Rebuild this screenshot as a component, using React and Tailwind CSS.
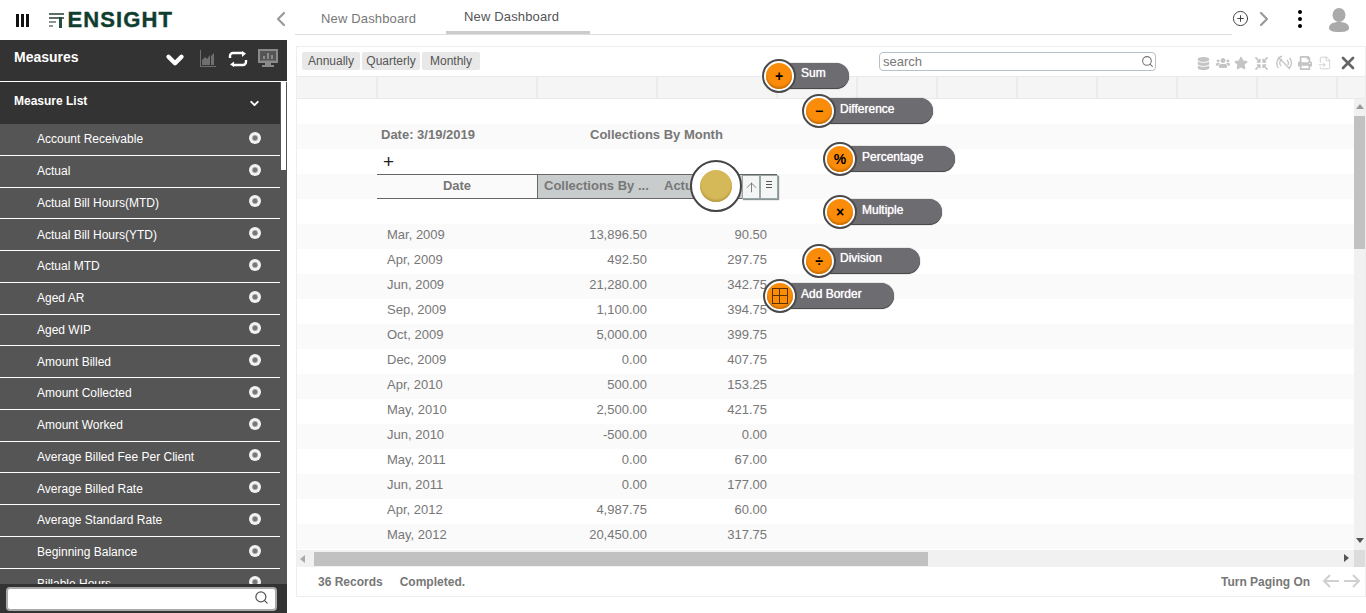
import React from 'react';
import { FaDatabase, FaUsers, FaStar, FaPrint, FaCompressArrowsAlt } from 'react-icons/fa';
import { ChevronDown, ChevronLeft, ChevronRight, CirclePlus, FileInput, X, ArrowUp, Search } from 'lucide-react';

const measures = [
    'Account Receivable', 'Actual', 'Actual Bill Hours(MTD)', 'Actual Bill Hours(YTD)', 'Actual MTD',
    'Aged AR', 'Aged WIP', 'Amount Billed', 'Amount Collected', 'Amount Worked',
    'Average Billed Fee Per Client', 'Average Billed Rate', 'Average Standard Rate', 'Beginning Balance', 'Billable Hours',
];

const rows = [
    ['Mar, 2009', '13,896.50', '90.50'], ['Apr, 2009', '492.50', '297.75'], ['Jun, 2009', '21,280.00', '342.75'],
    ['Sep, 2009', '1,100.00', '394.75'], ['Oct, 2009', '5,000.00', '399.75'], ['Dec, 2009', '0.00', '407.75'],
    ['Apr, 2010', '500.00', '153.25'], ['May, 2010', '2,500.00', '421.75'], ['Jun, 2010', '-500.00', '0.00'],
    ['May, 2011', '0.00', '67.00'], ['Jun, 2011', '0.00', '177.00'], ['Apr, 2012', '4,987.75', '60.00'],
    ['May, 2012', '20,450.00', '317.75'],
];

const colCells = ['w-[81px]', 'w-[160px]', 'w-[120px]', 'w-[120px]', 'w-[80px]', 'w-[80px]', 'w-[80px]', 'w-[80px]', 'w-[80px]', 'w-[80px]', 'w-[80px]', 'w-[80px]'];

const fabs = [
    { label: 'Sum', icon: '+', pos: 'left-[762px] top-[59px]', pill: 'w-[87px]', text: 'ml-[23px]' },
    { label: 'Difference', icon: '−', pos: 'left-[802px] top-[94px]', pill: 'w-[131px]', text: 'ml-[22px] pt-[1px]' },
    { label: 'Percentage', icon: '%', pos: 'left-[823px] top-[142px]', pill: 'w-[132px]', text: 'ml-[23px] pt-[1px]' },
    { label: 'Multiple', icon: '×', pos: 'left-[823px] top-[195px]', pill: 'w-[119px]', text: 'ml-[23px] pt-[1px]' },
    { label: 'Division', icon: '÷', pos: 'left-[802px] top-[244px]', pill: 'w-[118px]', text: 'ml-[22px]' },
    { label: 'Add Border', icon: 'border', pos: 'left-[763px] top-[279px]', pill: 'w-[131px]', text: 'ml-[22px] pt-[1px]' },
];

function Fab({ label, icon, pos, pill, text }) {
    return (
        <div className={`absolute ${pos} h-[34px] ${pill} flex items-center`}>
            <div className="absolute left-[16px] right-0 top-[4px] h-[26px] rounded-r-[13px] bg-[#6d6c71] border-b border-[#4a4a4a] shadow-[0_0_1px_#444]">
                <span className={`block ${text} text-[12px] leading-[20px] text-white [text-shadow:0_0_1px_#fff]`}>{label}</span>
            </div>
            <div className="relative w-[34px] h-[34px] rounded-full bg-white border-2 border-[#4a4a4a] flex items-center justify-center">
                <div className="w-[26px] h-[26px] rounded-full bg-[#fb8c0a] shadow-[inset_0_-2px_2px_#c96f05] flex items-center justify-center text-[14px] font-bold text-black leading-none">
                    {icon === 'border' ? (
                        <div className="w-[16px] h-[16px] border border-[#5a3200] grid grid-cols-2 grid-rows-2">
                            <div className="border-r border-b border-[#5a3200]" />
                            <div className="border-b border-[#5a3200]" />
                            <div className="border-r border-[#5a3200]" />
                            <div />
                        </div>
                    ) : icon}
                </div>
            </div>
        </div>
    );
}

function Logo() {
    return (
        <div className="flex items-center ml-[20px]">
            <svg width="17" height="15" viewBox="0 0 17 15">
                <rect x="0" y="0" width="15" height="2" fill="#5b6d66" />
                <rect x="0" y="4" width="15" height="2" fill="#5b6d66" />
                <rect x="0" y="8" width="7" height="2" fill="#8a9692" />
                <rect x="0" y="12" width="4" height="2" fill="#8a9692" />
                <rect x="10" y="4" width="3" height="11" fill="#24503f" />
            </svg>
            <span className="ml-[2px] text-[22px] leading-none font-bold text-[#0f3d2e] tracking-[1.1px] [-webkit-text-stroke:0.4px_#0f3d2e]">ENSIGHT</span>
        </div>
    );
}

function NoSignal() {
    return (
        <svg width="16" height="16" viewBox="0 0 16 16" fill="none" stroke="#c4c4c4" strokeWidth="1.3">
            <path d="M2.5 13A7.5 7.5 0 0 1 6 1.2M5 11a4.5 4.5 0 0 1 1-7M13.5 3a7.5 7.500 0 0 1 0 10M11 5a4.500 4.500 0 0 1 1 5M2 2l12 12" />
        </svg>
    );
}

function SyncIcon() {
    return (
        <svg width="20" height="16" viewBox="0 0 20 16" fill="none" stroke="white" strokeWidth="2.4">
            <path d="M2 7V5a3 3 0 0 1 3-3h10" />
            <path d="M18 9v2a3 3 0 0 1-3 3H5" />
            <path d="M14 0l4 2.5-4 3.5z M6 10.500L2 13.500l4 2.500z" fill="white" stroke="none" />
        </svg>
    );
}

function UserIcon() {
    return (
        <svg width="20" height="24" viewBox="0 0 20 24" className="absolute left-[1042px] top-[8px]" fill="#aaa">
            <ellipse cx="10" cy="7" rx="6.5" ry="7" />
            <path d="M0 20c0-4 4-6 10-6s10 2 10 6c0 2.500-3 4-10 4S0 22.500 0 20z" />
        </svg>
    );
}

export default function App() {
    return (
        <div className="relative w-[1366px] h-[613px] overflow-hidden flex bg-white font-['Liberation_Sans',Arial,sans-serif]">
            {/* left panel */}
            <aside className="w-[287px] h-full flex flex-col shrink-0">
                <div className="h-[40px] flex items-center bg-white shrink-0">
                    <div className="ml-[16px] flex gap-[2px]">
                        <span className="w-[3px] h-[13px] bg-[#111]" />
                        <span className="w-[3px] h-[13px] bg-[#111]" />
                        <span className="w-[2.5px] h-[13px] bg-[#111]" />
                    </div>
                    <Logo />
                </div>
                <div className="h-[41px] bg-[#333] flex items-center pl-[14px] shrink-0 relative">
                    <span className="text-[14px] font-bold text-white -mt-[7px]">Measures</span>
                    <ChevronDown size={26} strokeWidth={4} className="absolute left-[162px] top-[7px] text-white" />
                    <svg width="16" height="17" viewBox="0 0 16 17" className="absolute left-[200px] top-[10px]">
                        <path d="M0 0v17h16v-1H1V0z M2 15V10l3-3 2 2 3-4v10z M11 15V6l3-3v12z" fill="#6f6f6f" />
                    </svg>
                    <div className="absolute left-[228px] top-[11px]"><SyncIcon /></div>
                    <svg width="20" height="19" viewBox="0 0 20 19" className="absolute left-[258px] top-[9px]">
                        <path d="M0 0h20v14h-7v2h3v2H4v-2h3v-2H0z" fill="#8a8a8a" />
                        <path d="M2 2h16v10H2z" fill="#555" />
                        <path d="M5 10h2V7H5zM9 10h2V4H9zM13 10h2V6h-2zM3 11h14v.6H3z" fill="#8a8a8a" />
                    </svg>
                </div>
                <div className="h-px bg-white shrink-0" />
                <div className="relative flex-1 min-h-0 overflow-hidden bg-[#555]">
                    <div className="w-[280px]">
                        <div className="h-[42px] bg-[#333] flex items-center justify-between pl-[14px] pr-[19px]">
                            <span className="text-[12px] font-bold text-white -mt-[4px]">Measure List</span>
                            <ChevronDown size={13} strokeWidth={3.5} className="text-white" />
                        </div>
                        {measures.map((m) => (
                            <div key={m} className="h-[31.75px] pl-[37px] pr-[19px] flex items-center justify-between border-b border-white bg-[#555]">
                                <span className="text-[12px] text-white">{m}</span>
                                <span className="w-[12px] h-[12px] rounded-full bg-[radial-gradient(circle,#777_22%,#f2f2f2_42%)] -mt-[3px]" />
                            </div>
                        ))}
                    </div>
                    <div className="absolute left-[281px] top-0 w-[5px] h-[88px] bg-white" />
                    <div className="absolute left-0 right-0 bottom-0 h-[29px] bg-[#333] flex items-center pl-[6px]">
                        <div className="relative w-[271px] h-[24px] bg-white rounded-[4px] border-2 border-[#aaa]">
                            <Search size={15} strokeWidth={2} className="absolute right-[6px] top-[1px] text-[#555]" />
                        </div>
                    </div>
                </div>
            </aside>

            {/* right panel */}
            <main className="flex-1 min-w-0 flex flex-col">
                <div className="h-[35px] relative shrink-0">
                    <ChevronLeft size={24} strokeWidth={2.2} className="absolute -left-[18px] top-[7px] text-[#999]" />
                    <div className="absolute left-[8px] right-[134px] bottom-0 h-px bg-[#ddd]" />
                    <div className="flex h-full pl-[8px]">
                        <div className="w-[151px] pl-[26px] pt-[9px] text-[13px] tracking-[0.15px] text-[#777]">New Dashboard</div>
                        <div className="w-[144px] h-[34px] border-b-[3px] border-[#ccc] pl-[18px] pt-[7px] text-[13px] tracking-[0.15px] text-[#555]">New Dashboard</div>
                    </div>
                    <CirclePlus size={17} strokeWidth={1.3} className="absolute left-[945px] top-[10px] text-[#333]" />
                    <ChevronRight size={24} strokeWidth={2.2} className="absolute left-[965px] top-[7px] text-[#999]" />
                    <div className="absolute left-[1011px] top-[10px] flex flex-col gap-[3px]">
                        <span className="w-[4px] h-[4px] rounded-full bg-black" />
                        <span className="w-[4px] h-[4px] rounded-full bg-black" />
                        <span className="w-[4px] h-[4px] rounded-full bg-black" />
                    </div>
                    <UserIcon />
                </div>

                <div className="mt-[11px] ml-[9px] h-[551px] border border-[#eee] flex flex-col overflow-hidden">
                    {/* toolbar */}
                    <div className="h-[29px] shrink-0 relative flex items-start pl-[5px] pt-[5px] gap-[2px]">
                        <div className="w-[58px] h-[18px] bg-[#e8e8e8] rounded-[2px] text-[12px] text-[#555] leading-[18px] text-center">Annually</div>
                        <div className="w-[58px] h-[18px] bg-[#e8e8e8] rounded-[2px] text-[12px] text-[#555] leading-[18px] text-center">Quarterly</div>
                        <div className="w-[58px] h-[18px] bg-[#e8e8e8] rounded-[2px] text-[12px] text-[#555] leading-[18px] text-center">Monthly</div>
                        <div className="ml-[397px] w-[277px] h-[19px] border border-[#b5c2c7] rounded-[4px] flex items-center justify-between pl-[3px] pr-[1px] bg-white">
                            <span className="text-[13px] text-[#777] leading-none">search</span>
                            <Search size={13} strokeWidth={2} className="text-[#777]" />
                        </div>
                        <div className="absolute left-[900px] top-[6px] flex items-center text-[#c4c4c4]">
                            <FaDatabase size={13} />
                            <FaUsers size={14} className="ml-[6px]" />
                            <FaStar size={14} className="ml-[4px]" />
                            <FaCompressArrowsAlt size={13} className="ml-[7px]" />
                            <div className="ml-[8px]"><NoSignal /></div>
                            <FaPrint size={14} className="ml-[6px]" />
                            <FileInput size={14} strokeWidth={1.3} className="ml-[6px]" />
                            <X size={20} strokeWidth={3.2} className="text-[#666] ml-[6px]" />
                        </div>
                    </div>

                    {/* column band */}
                    <div className="h-[23px] shrink-0 flex bg-[#f5f5f5] border-y border-[#eaeaea]">
                        {colCells.map((c, i) => (
                            <div key={i} className={`${c} shrink-0 h-full border-r-2 border-[#ebebeb]`} />
                        ))}
                    </div>

                    {/* grid body */}
                    <div className="relative h-[451px] shrink-0 overflow-hidden">
                        <div className="h-[25px]" />
                        <div className="h-[25px] bg-[#fafafa] flex items-center text-[13px] font-bold text-[#777]">
                            <span className="ml-[84px] w-[209px] -mt-[4px]">Date: 3/19/2019</span>
                            <span className="-mt-[4px]">Collections By Month</span>
                        </div>
                        <div className="h-[25px] flex items-center pl-[86px] text-[19px] leading-none text-[#222]">+</div>
                        <div className="h-[25px] bg-[#fafafa] flex text-[13px] font-bold text-[#777]">
                            <div className="ml-[80px] w-[160px] border-y border-[#666] text-center leading-[22px]">Date</div>
                            <div className="w-[120px] bg-[#c8cccc] border-y border-l border-[#666] border-r-[#999] pl-[6px] leading-[22px] whitespace-nowrap">Collections By ...</div>
                            <div className="w-[120px] bg-[#c8cccc] border-y border-[#666] pl-[7px] leading-[22px]">Actual</div>
                        </div>
                        <div className="h-[25px]" />
                        {rows.map((r, i) => (
                            <div key={r[0]} className={`h-[25px] flex items-center text-[13px] text-[#777] ${i % 2 === 0 ? 'bg-[#fafafa]' : 'bg-white'}`}>
                                <span className="ml-[90px] w-[150px] -mt-[4px]">{r[0]}</span>
                                <span className="w-[110px] text-right -mt-[4px]">{r[1]}</span>
                                <span className="w-[120px] text-right -mt-[4px]">{r[2]}</span>
                            </div>
                        ))}
                        {/* vertical scrollbar */}
                        <div className="absolute right-0 top-0 bottom-0 w-[11px] bg-[#f1f1f1]">
                            <div className="mx-auto mt-[5px] w-0 h-0 border-x-[4px] border-x-transparent border-b-[5px] border-b-[#999]" />
                            <div className="mt-[7px] h-[133px] bg-[#c1c1c1]" />
                            <div className="absolute bottom-[7px] left-[2px] w-0 h-0 border-x-[4px] border-x-transparent border-t-[5px] border-t-[#555]" />
                        </div>
                    </div>

                    {/* horizontal scrollbar */}
                    <div className="h-[17px] shrink-0 bg-[#f1f1f1] flex items-center relative">
                        <div className="ml-[3px] w-0 h-0 border-y-[4px] border-y-transparent border-r-[5px] border-r-[#aaa]" />
                        <div className="ml-[9px] w-[614px] h-[14px] bg-[#c1c1c1]" />
                        <div className="absolute right-[16px] top-[4px] w-0 h-0 border-y-[4px] border-y-transparent border-l-[5px] border-l-[#555]" />
                        <div className="absolute right-0 top-0 w-[11px] h-full bg-[#dcdcdc]" />
                    </div>

                    {/* status */}
                    <div className="h-[29px] shrink-0 flex items-center text-[12px] font-bold text-[#777] pl-[21px] relative">
                        <span>36 Records</span>
                        <span className="ml-[17px]">Completed.</span>
                        <span className="absolute left-[924px] top-[6px]">Turn Paging On</span>
                        <svg width="40" height="14" viewBox="0 0 40 14" className="absolute left-[1025px] top-[7px]" fill="none" stroke="#d0d0d0" strokeWidth="2">
                            <path d="M17 7H2M8 1L2 7l6 6M22 7h15M31 1l6 6-6 6" />
                        </svg>
                    </div>
                </div>
            </main>

            {/* radial menu over the grid */}
            {fabs.map((f) => (
                <Fab key={f.label} {...f} />
            ))}

            {/* column header hover controls */}
            <div className="absolute left-[742px] top-[175px] w-[18px] h-[24px] bg-[#f4f6f6] border border-[#9aa5a5] shadow-[1px_1px_1px_#8a9494] flex items-center justify-center">
                <ArrowUp size={15} strokeWidth={1.3} className="text-[#666]" />
            </div>
            <div className="absolute left-[760px] top-[175px] w-[18px] h-[24px] bg-[#f4f6f6] border border-[#9aa5a5] shadow-[1px_1px_1px_#8a9494] flex flex-col items-center pt-[5px] gap-[2px]">
                <span className="w-[6px] h-px bg-[#555]" />
                <span className="w-[6px] h-px bg-[#555]" />
                <span className="w-[6px] h-px bg-[#555]" />
            </div>
            <div className="absolute left-[690px] top-[160px] w-[52px] h-[52px] rounded-full bg-white border-2 border-[#444] flex items-center justify-center">
                <div className="w-[32px] h-[32px] rounded-full bg-[#d5b858] shadow-[inset_0_-2px_2px_#b89c45]" />
            </div>
        </div>
    );
}
